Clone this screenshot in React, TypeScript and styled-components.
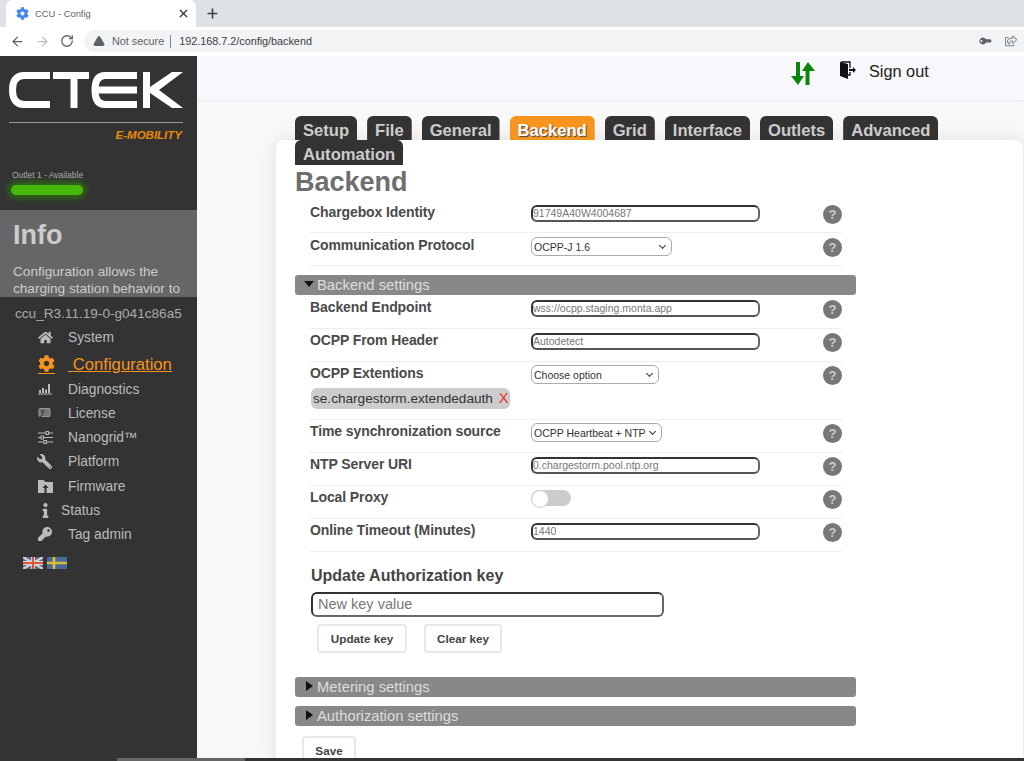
import React from "react";
import styled, { createGlobalStyle } from "styled-components";
import { FaHome, FaCog, FaWrench, FaInfo, FaKey, FaRegShareSquare } from "react-icons/fa";
import { ArrowLeft, ArrowRight, RotateCw, Plus, X, TriangleAlert } from "lucide-react";

const GlobalStyle = createGlobalStyle`
  html, body { margin: 0; padding: 0; height: 100%; overflow: hidden; }
  body { font-family: "Liberation Sans", Arial, sans-serif; background: #f8f8f8; }
  * { box-sizing: border-box; }
`;

const tabs = ["Setup", "File", "General", "Backend", "Grid", "Interface", "Outlets", "Advanced", "Automation"];

function BarsIcon() {
  return (
    <svg width="14" height="12" viewBox="0 0 14 12" fill="#bbb">
      <rect x="0" y="10.5" width="14" height="1" />
      <rect x="1" y="7" width="2" height="3" />
      <rect x="4" y="5" width="2" height="5" />
      <rect x="7" y="6.5" width="2" height="3.5" />
      <rect x="10" y="1" width="2" height="9" />
    </svg>
  );
}

function LicenseIcon() {
  return (
    <svg width="13" height="11" viewBox="0 0 13 11">
      <rect x="1" y="0.5" width="11" height="8" rx="1" fill="#777" stroke="#999" />
      <path d="M3 3H7M3 5H6M2 9L5 7" stroke="#333" strokeWidth="1" fill="none" />
    </svg>
  );
}

function SlidersIcon() {
  return (
    <svg width="15" height="13" viewBox="0 0 15 13" stroke="#bbb" fill="#333" strokeWidth="1">
      <path d="M0 2H15M0 6.5H15M0 11H15" />
      <rect x="8" y="0.5" width="2.5" height="3" />
      <rect x="3" y="5" width="2.5" height="3" />
      <rect x="6" y="9.5" width="2.5" height="3" />
    </svg>
  );
}

function FolderIcon() {
  return (
    <svg width="15" height="13" viewBox="0 0 15 13">
      <path d="M0 0H5.5L7.5 2H15V13H0Z" fill="#bbb" />
      <path d="M7.5 4.5L10.5 8H8.5V13H6.5V8H4.5Z" fill="#333" />
    </svg>
  );
}

function FlipIcon({ children }: { children: React.ReactNode }) {
  return <Flipped>{children}</Flipped>;
}

const navItems = [
  { label: "System", icon: <FaHome size={15} /> },
  { label: "Configuration", icon: <FaCog size={17} />, active: true },
  { label: "Diagnostics", icon: <BarsIcon /> },
  { label: "License", icon: <LicenseIcon /> },
  { label: "Nanogrid™", icon: <SlidersIcon /> },
  { label: "Platform", icon: <FlipIcon><FaWrench size={15} /></FlipIcon> },
  { label: "Firmware", icon: <FolderIcon /> },
  { label: "Status", icon: <FaInfo size={15} />, narrow: true },
  { label: "Tag admin", icon: <FaKey size={14} /> },
];

function CtekLogo() {
  return (
    <LogoSvg width="174" height="36" viewBox="0 0 174 36" fill="none">
      <g stroke="#fff" strokeWidth="7">
        <path d="M41 3.5H15C7 3.5 3.5 9 3.5 18S7 32.5 15 32.5H41" />
        <path d="M44 3.5H80M65 3.5V36" />
        <path d="M128 3.5H96C88 3.5 86 10 86 18S88 32.5 96 32.5H128M88 18H128" />
      </g>
      <rect x="134" y="0" width="7" height="36" fill="#fff" />
      <path d="M141 15L163 0H174L150 18L174 36H163L141 21Z" fill="#fff" />
    </LogoSvg>
  );
}

function Row({ label, children, extra }: { label: string; children?: React.ReactNode; extra?: React.ReactNode }) {
  return (
    <FormRow>
      <RowMain>
        <Label>{label}</Label>
        <Control>{children}</Control>
        <Help>?</Help>
      </RowMain>
      {extra}
    </FormRow>
  );
}

export default function App() {
  return (
    <>
      <GlobalStyle />
      <Browser>
        <TabStrip>
          <BrowserTab>
            <FaCog size={13} color="#4285f4" />
            <TabTitle>CCU - Config</TabTitle>
            <X size={13} color="#3c4043" strokeWidth={2.5} />
          </BrowserTab>
          <NewTab>
            <Plus size={15} color="#3c4043" strokeWidth={2.5} />
          </NewTab>
        </TabStrip>
        <Toolbar>
          <ArrowLeft size={15} color="#5f6368" strokeWidth={2} />
          <ArrowRight size={15} color="#bdc1c6" strokeWidth={2} />
          <RotateCw size={14} color="#5f6368" strokeWidth={2.2} />
          <Omnibox>
            <TriangleAlert size={12} color="#5f6368" fill="#5f6368" />
            <NotSecure>Not secure</NotSecure>
            <UrlDivider />
            <Url>192.168.7.2/config/backend</Url>
            <OmniIcons>
              <KeyGlyph>
                <FaKey size={10} color="#5f6368" />
              </KeyGlyph>
              <FaRegShareSquare size={12} color="#80868b" />
            </OmniIcons>
          </Omnibox>
        </Toolbar>
      </Browser>
      <Page>
        <Sidebar>
          <Logo>
            <CtekLogo />
            <LogoRule />
            <Mobility>E-MOBILITY</Mobility>
          </Logo>
          <Outlet>Outlet 1 - Available</Outlet>
          <OutletBar />
          <InfoBox>
            <InfoTitle>Info</InfoTitle>
            <InfoText>Configuration allows the charging station behavior to</InfoText>
          </InfoBox>
          <Version>ccu_R3.11.19-0-g041c86a5</Version>
          <Nav>
            {navItems.map((item) => (
              <NavItem key={item.label} $active={item.active}>
                <NavIcon $active={item.active}>{item.icon}</NavIcon>
                <NavText $active={item.active} $narrow={item.narrow}>
                  {item.active ? "\u00a0" : ""}
                  {item.label}
                </NavText>
              </NavItem>
            ))}
          </Nav>
          <Flags>
            <svg width="20" height="12" viewBox="0 0 20 12">
              <rect width="20" height="12" fill="#4a628c" />
              <path d="M0 0L20 12M20 0L0 12" stroke="#ccc" strokeWidth="2.4" />
              <path d="M10 0V12M0 6H20" stroke="#ddd" strokeWidth="4" />
              <path d="M10 0V12M0 6H20" stroke="#d8553c" strokeWidth="2.2" />
            </svg>
            <svg width="20" height="12" viewBox="0 0 20 12">
              <rect width="20" height="12" fill="#4a6a94" />
              <path d="M7 0V12M0 6H20" stroke="#d8bc3c" strokeWidth="2.6" />
            </svg>
          </Flags>
        </Sidebar>
        <Main>
          <Header>
            <Arrows width="26" height="24" viewBox="0 0 26 24">
              <path d="M6 0H10V14H14L8 23L1 14H6Z" fill="#0a860a" />
              <path d="M15.5 23H19.5V9H25L18 0L12 9H15.5Z" fill="#0a860a" />
            </Arrows>
            <DoorIcon width="16" height="18" viewBox="0 0 16 18">
              <path d="M0 1L8 3V18L0 15Z" fill="#111" />
              <path d="M1 1H10V7M10 11V14H8" stroke="#111" strokeWidth="1.3" fill="none" />
              <path d="M9 8H13V6L16 9L13 12V10H9Z" fill="#111" />
            </DoorIcon>
            <SignOut>Sign out</SignOut>
          </Header>
          <Card>
            <TabBar>
              {tabs.map((t) => (
                <Tab key={t} $active={t === "Backend"}>
                  {t}
                </Tab>
              ))}
            </TabBar>
            <Title>Backend</Title>
            <Rows $top={5}>
              <Row label="Chargebox Identity">
                <TextBox>91749A40W4004687</TextBox>
              </Row>
              <Row label="Communication Protocol">
                <SelectBox $w={141}>OCPP-J 1.6</SelectBox>
              </Row>
            </Rows>
            <SectionBar $first>
              <CaretDown />
              Backend settings
            </SectionBar>
            <Rows $top={4}>
              <Row label="Backend Endpoint">
                <TextBox>wss://ocpp.staging.monta.app</TextBox>
              </Row>
              <Row label="OCPP From Header">
                <TextBox>Autodetect</TextBox>
              </Row>
              <Row
                label="OCPP Extentions"
                extra={
                  <Chip>
                    se.chargestorm.extendedauth <ChipX>X</ChipX>
                  </Chip>
                }
              >
                <SelectBox $w={128}>Choose option</SelectBox>
              </Row>
              <Row label="Time synchronization source">
                <SelectBox $w={131}>OCPP Heartbeat + NTP</SelectBox>
              </Row>
              <Row label="NTP Server URI">
                <TextBox>0.chargestorm.pool.ntp.org</TextBox>
              </Row>
              <Row label="Local Proxy">
                <Toggle />
              </Row>
              <Row label="Online Timeout (Minutes)">
                <TextBox>1440</TextBox>
              </Row>
            </Rows>
            <KeyTitle>Update Authorization key</KeyTitle>
            <KeyInput>New key value</KeyInput>
            <KeyButtons>
              <Button $w={90}>Update key</Button>
              <Button $w={78}>Clear key</Button>
            </KeyButtons>
            <SectionBar>
              <CaretRight />
              Metering settings
            </SectionBar>
            <SectionBar>
              <CaretRight />
              Authorization settings
            </SectionBar>
            <SaveButton $w={54}>Save</SaveButton>
          </Card>
        </Main>
      </Page>
      <BottomStrip>
        <StripThumb />
      </BottomStrip>
    </>
  );
}

const Browser = styled.div`
  height: 56px;
  background: #fff;
`;

const TabStrip = styled.div`
  height: 27px;
  background: #dee1e6;
  display: flex;
  align-items: flex-end;
  padding-left: 6px;
`;

const BrowserTab = styled.div`
  width: 190px;
  height: 27px;
  background: #fff;
  border-radius: 7px 7px 0 0;
  display: flex;
  align-items: center;
  padding: 0 6px 0 10px;
`;

const TabTitle = styled.span`
  flex: 1;
  margin-left: 6px;
  font-size: 9.4px;
  color: #5f6368;
`;

const NewTab = styled.div`
  display: flex;
  align-items: center;
  height: 27px;
  margin-left: 9px;
`;

const Toolbar = styled.div`
  height: 28px;
  display: flex;
  align-items: center;
  gap: 10px;
  padding-left: 10px;
`;

const Omnibox = styled.div`
  flex: 1;
  height: 22px;
  background: #f1f3f4;
  border-radius: 11px 0 0 11px;
  display: flex;
  align-items: center;
  padding: 0 7px 0 9px;
  font-size: 10.8px;
`;

const NotSecure = styled.span`
  margin-left: 7px;
  color: #5f6368;
`;

const UrlDivider = styled.span`
  width: 1px;
  height: 13px;
  background: #80868b;
  margin: 0 8px 0 6px;
`;

const Url = styled.span`
  flex: 1;
  color: #3c4043;
`;

const OmniIcons = styled.span`
  display: flex;
  align-items: center;
  gap: 15px;
`;

const KeyGlyph = styled.span`
  display: flex;
  transform: rotate(225deg);
`;

const Page = styled.div`
  display: flex;
  height: 702px;
  overflow: hidden;
`;

const BottomStrip = styled.div`
  height: 3px;
  background: #333;
  padding-left: 117px;
`;

const StripThumb = styled.div`
  width: 128px;
  height: 3px;
  background: #666;
`;

const Sidebar = styled.aside`
  width: 197px;
  flex: none;
  background: #333;
  color: #bbb;
`;

const Logo = styled.div`
  padding: 16px 14px 0 9px;
  height: 100px;
`;

const LogoSvg = styled.svg`
  display: block;
`;

const LogoRule = styled.div`
  height: 1px;
  background: #999;
  margin-top: 14px;
`;

const Mobility = styled.div`
  text-align: right;
  padding-right: 1px;
  color: #e8890c;
  font-size: 11.5px;
  font-weight: bold;
  font-style: italic;
  margin-top: 6px;
`;

const Outlet = styled.div`
  font-size: 8.5px;
  color: #aaa;
  margin: 14px 0 0 12px;
`;

const OutletBar = styled.div`
  width: 72px;
  height: 10px;
  margin: 5px 0 0 11px;
  border-radius: 5px;
  background: #46b80c;
  box-shadow: 0 0 6px 3px #2e7010;
`;

const InfoBox = styled.div`
  margin-top: 15px;
  height: 87px;
  background: #666;
  padding: 10px 13px 0;
  overflow: hidden;
`;

const InfoTitle = styled.div`
  font-size: 27px;
  font-weight: bold;
  color: #ccc;
`;

const InfoText = styled.div`
  margin-top: 12px;
  font-size: 13.6px;
  line-height: 17px;
  color: #ccc;
`;

const Version = styled.div`
  margin: 9px 0 0 15px;
  font-size: 13.6px;
  color: #aaa;
`;

const Nav = styled.nav`
  margin-top: 4px;
  display: flex;
  flex-direction: column;
`;

const NavItem = styled.div<{ $active?: boolean }>`
  display: flex;
  align-items: center;
  height: ${(p) => (p.$active ? "28px" : "24.2px")};
  padding-left: 37px;
  padding-top: ${(p) => (p.$active ? "3px" : "0")};
`;

const NavIcon = styled.span<{ $active?: boolean }>`
  width: 31px;
  flex: none;
  display: flex;
  align-items: center;
  color: ${(p) => (p.$active ? "#f7941d" : "#bbb")};
  & > svg {
    margin-left: 1px;
    padding-bottom: ${(p) => (p.$active ? "1px" : "0")};
    border-bottom: ${(p) => (p.$active ? "1px solid #f7941d" : "none")};
    box-sizing: content-box;
  }
`;

const Flipped = styled.span`
  display: flex;
  transform: scaleX(-1);
`;

const NavText = styled.span<{ $active?: boolean; $narrow?: boolean }>`
  font-size: ${(p) => (p.$active ? "16.7px" : "13.8px")};
  color: ${(p) => (p.$active ? "#f7941d" : "#bbb")};
  text-decoration: ${(p) => (p.$active ? "underline" : "none")};
  margin-left: ${(p) => (p.$narrow ? "-7px" : "0")};
`;

const Flags = styled.div`
  display: flex;
  gap: 4px;
  margin: 10px 0 0 23px;
`;

const Main = styled.main`
  flex: 1;
  min-width: 0;
  display: flex;
  flex-direction: column;
`;

const Header = styled.header`
  height: 44px;
  flex: none;
  background-color: #f8f8fc;
  background-image: radial-gradient(#eeeef2 0.6px, transparent 0.6px);
  background-size: 4px 4px;
  box-shadow: 0 1px 2px rgba(0, 0, 0, 0.06);
  display: flex;
  align-items: flex-start;
  padding: 5px 0 0 593px;
`;

const Arrows = styled.svg`
  flex: none;
  margin: 1px 0 0 0;
`;

const DoorIcon = styled.svg`
  flex: none;
  margin: 0 0 0 24px;
`;

const SignOut = styled.span`
  margin: 1px 0 0 13px;
  font-size: 16.3px;
  color: #222;
`;

const Card = styled.section`
  margin: 40px 1px 0 79px;
  flex: 1;
  background: #fff;
  border-radius: 8px 8px 0 0;
  padding: 0 0 0 19px;
  box-shadow: 0 0 18px rgba(0, 0, 0, 0.1);
`;

const TabBar = styled.div`
  display: flex;
  flex-wrap: wrap;
  column-gap: 10px;
  margin-top: -24px;
`;

const Tab = styled.div<{ $active?: boolean }>`
  height: 25px;
  margin-bottom: -1px;
  padding: 5px 8px 0;
  border-radius: 6px 6px 0 0;
  font-size: 16.6px;
  line-height: 19px;
  font-weight: bold;
  background: ${(p) => (p.$active ? "#f7941d" : "#333")};
  color: ${(p) => (p.$active ? "#fff" : "#ccc")};
  text-shadow: ${(p) => (p.$active ? "1px 1px 1px #444" : "none")};
  &:nth-child(-n + 8) {
    clip-path: inset(0 0 1px 0);
  }
`;

const Title = styled.h1`
  margin: 1px 0 0;
  height: 35px;
  line-height: 34px;
  font-size: 27px;
  font-weight: bold;
  color: #6e6e6e;
`;

const FormRow = styled.div`
  border-bottom: 1px solid #eee;
  padding-bottom: 3px;
  min-height: 33px;
`;

const Rows = styled.div<{ $top: number }>`
  width: 532px;
  margin-left: 15px;
  ${FormRow} {
    padding-top: ${(p) => p.$top}px;
  }
`;

const RowMain = styled.div`
  display: flex;
  align-items: flex-start;
`;

const Label = styled.div`
  width: 221px;
  flex: none;
  margin-top: -1px;
  font-size: 14px;
  font-weight: bold;
  letter-spacing: -0.1px;
  color: #4a4a4a;
  line-height: 16px;
`;

const Control = styled.div`
  flex: 1;
  display: flex;
  align-items: center;
`;

const TextBox = styled.div`
  width: 229px;
  height: 17px;
  border: 2px solid #333;
  border-right-color: #666;
  border-bottom-color: #555;
  border-radius: 6px;
  padding-left: 0;
  font-size: 10.5px;
  line-height: 13px;
  color: #777;
  background: #fff;
`;

const SelectBox = styled.div<{ $w: number }>`
  width: ${(p) => p.$w}px;
  height: 19px;
  margin-top: -1px;
  border: 1px solid #aaa;
  border-radius: 6px;
  padding: 0 3px 0 2px;
  font-size: 10.5px;
  color: #333;
  background: #fff;
  display: flex;
  align-items: center;
  justify-content: space-between;
  &::after {
    content: "";
    width: 4px;
    height: 4px;
    margin: 0 3px 2px 0;
    border-right: 1.5px solid #333;
    border-bottom: 1.5px solid #333;
    transform: rotate(45deg);
  }
`;

const Help = styled.div`
  flex: none;
  width: 19px;
  height: 19px;
  border-radius: 50%;
  background: #777;
  color: #ccc;
  font-size: 13px;
  font-weight: bold;
  text-align: center;
  line-height: 19px;
`;

const SectionBar = styled.div<{ $first?: boolean }>`
  width: 561px;
  height: 20px;
  margin-top: 9px;
  margin-bottom: ${(p) => (p.$first ? "1px" : "0")};
  padding-left: ${(p) => (p.$first ? "9px" : "11px")};
  background: #888;
  border-radius: 3px;
  display: flex;
  align-items: center;
  font-size: 14.8px;
  color: #ddd;
`;

const CaretDown = styled.span`
  width: 0;
  height: 0;
  margin: 0 3px 3px 0;
  border-left: 5px solid transparent;
  border-right: 5px solid transparent;
  border-top: 6px solid #111;
`;

const CaretRight = styled.span`
  width: 0;
  height: 0;
  margin: 0 4px 2px 0;
  border-top: 5px solid transparent;
  border-bottom: 5px solid transparent;
  border-left: 7px solid #111;
`;

const Chip = styled.div`
  width: fit-content;
  height: 21px;
  margin: 3px 0 7px 1px;
  padding: 0 2px;
  border-radius: 6px;
  background: #ccc;
  font-size: 13.6px;
  line-height: 21px;
  color: #333;
`;

const ChipX = styled.span`
  color: #e8321e;
  font-size: 14.5px;
  margin-left: 2px;
`;

const Toggle = styled.div`
  position: relative;
  width: 40px;
  height: 16px;
  border-radius: 8px;
  background: #ccc;
  &::before {
    content: "";
    position: absolute;
    left: 0;
    top: 0;
    width: 16px;
    height: 16px;
    border: 1px solid #ccc;
    border-radius: 50%;
    background: #fff;
  }
`;

const KeyTitle = styled.h3`
  margin: 14px 0 0 16px;
  font-size: 16px;
  line-height: 20px;
  font-weight: bold;
  color: #444;
`;

const KeyInput = styled.div`
  width: 353px;
  height: 25px;
  margin: 6px 0 0 16px;
  border: 2px solid #333;
  border-right-color: #666;
  border-bottom-color: #666;
  border-radius: 6px;
  padding-left: 5px;
  font-size: 14.5px;
  line-height: 21px;
  color: #777;
`;

const KeyButtons = styled.div`
  display: flex;
  gap: 17px;
  margin: 7px 0 24px 22px;
`;

const Button = styled.div<{ $w: number }>`
  width: ${(p) => p.$w}px;
  height: 29px;
  border: 2px solid #e8e8e8;
  border-radius: 4px;
  font-size: 11.7px;
  font-weight: bold;
  line-height: 25px;
  text-align: center;
  color: #444;
`;

const SaveButton = styled(Button)`
  margin: 10px 0 0 7px;
`;
